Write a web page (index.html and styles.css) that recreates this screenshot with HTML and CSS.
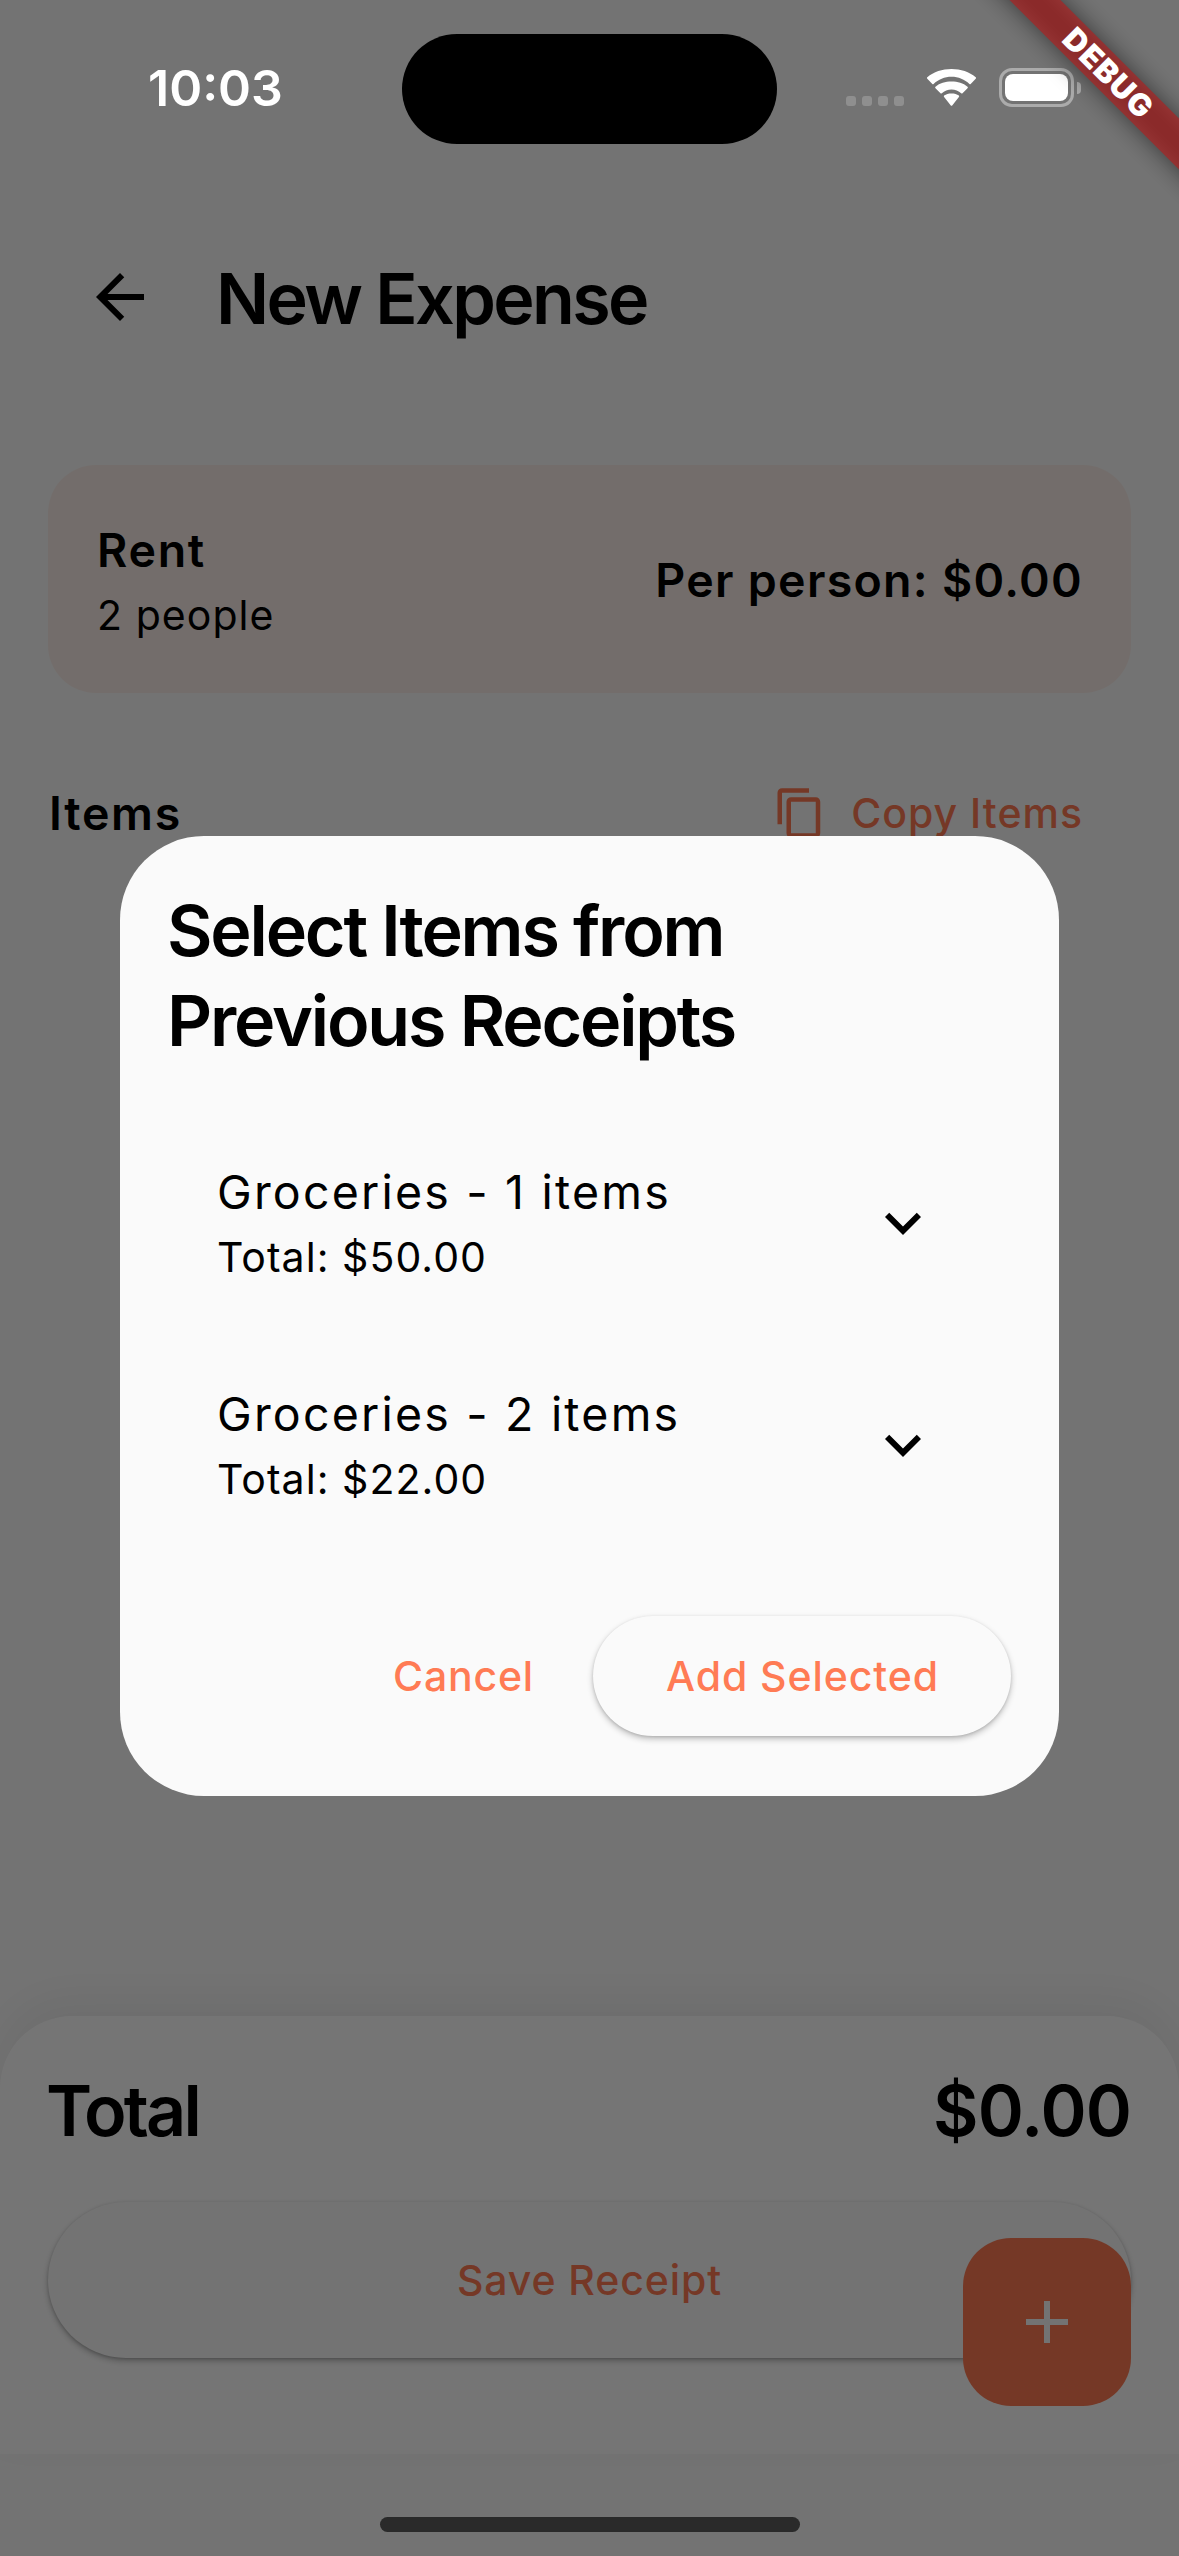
FILE: index.html
```html
<!DOCTYPE html>
<html lang="en">
<head>
<meta charset="utf-8">
<title>New Expense</title>
<link rel="stylesheet" href="styles.css">
</head>
<body>
<div class="screen">
  <main class="page">
    <header class="app-bar">
      <svg class="icon-back" viewBox="0 0 24 24" aria-hidden="true"><path d="M20 11H7.83l5.59-5.59L12 4l-8 8 8 8 1.41-1.41L7.83 13H20v-2z"/></svg>
      <h1 class="headline page-title">New Expense</h1>
    </header>

    <section class="summary">
      <div class="summary-info">
        <span class="title-md rent">Rent</span>
        <span class="body-md people">2 people</span>
      </div>
      <span class="title-md per-person">Per person: $0.00</span>
    </section>

    <section class="items-row">
      <h2 class="title-md items-title">Items</h2>
      <div class="copy">
        <svg class="icon-copy" viewBox="0 0 24 24" aria-hidden="true"><path d="M16 1H4c-1.1 0-2 .9-2 2v14h2V3h12V1zm3 4H8c-1.1 0-2 .9-2 2v14c0 1.100.9 2 2 2h11c1.100 0 2-.9 2-2V7c0-1.100-.9-2-2-2zm0 16H8V7h11v14z"/></svg>
        <span class="label copy-label">Copy Items</span>
      </div>
    </section>

    <section class="sheet">
      <div class="total-row">
        <span class="headline total-label">Total</span>
        <span class="headline total-value">$0.00</span>
      </div>
      <button class="save label">Save Receipt</button>
    </section>
    <button class="fab" aria-label="Add item">
      <svg class="icon-add" viewBox="0 0 24 24" aria-hidden="true"><path d="M19 13h-6v6h-2v-6H5v-2h6V5h2v6h6v2z"/></svg>
    </button>
  </main>

  <div class="scrim">
    <div class="dialog">
      <h2 class="headline dialog-title">Select Items from<br>Previous Receipts</h2>
      <div class="receipts">
        <div class="receipt">
          <div class="receipt-text">
            <span class="body-lg">Groceries - 1 items</span>
            <span class="body-md">Total: $50.00</span>
          </div>
          <svg class="icon-more" viewBox="0 0 24 24" aria-hidden="true"><path d="M16.590 8.590L12 13.170 7.410 8.590 6 10l6 6 6-6z"/></svg>
        </div>
        <div class="receipt">
          <div class="receipt-text">
            <span class="body-lg">Groceries - 2 items</span>
            <span class="body-md">Total: $22.00</span>
          </div>
          <svg class="icon-more" viewBox="0 0 24 24" aria-hidden="true"><path d="M16.590 8.590L12 13.170 7.410 8.590 6 10l6 6 6-6z"/></svg>
        </div>
      </div>
      <div class="actions">
        <button class="cancel label">Cancel</button>
        <button class="add label">Add Selected</button>
      </div>
    </div>
  </div>

  <div class="status-bar">
    <span class="time">10:03</span>
    <span class="island"></span>
    <div class="status-icons">
      <span class="cell"><i></i><i></i><i></i><i></i></span>
      <svg class="wifi" viewBox="0 0 51 38" aria-hidden="true">
        <path d="M25.500 7.800c6.900 0 13.200 2.700 17.900 7.100.4.4.9.4 1.300 0l5-5.100c.5-.5.5-1.100 0-1.500C43.300 2.800 34.800 0 25.500 0S7.700 2.800 1.300 8.300c-.5.4-.5 1 0 1.500l5 5.100c.4.4.9.4 1.300 0C12.300 10.500 18.600 7.800 25.500 7.800z"/>
        <path d="M25.500 20.600c3.700 0 7.100 1.400 9.700 3.700.4.4.9.4 1.300 0l5-5c.5-.5.5-1.100 0-1.500-4.200-3.900-9.800-5.300-16-5.300s-11.800 1.400-16 5.300c-.5.4-.5 1 0 1.500l5 5c.4.4.9.4 1.300 0 2.600-2.300 6-3.700 9.700-3.700z"/>
        <path d="M32.900 28c.4-.4.400-1 0-1.400-2-1.500-4.500-2.100-7.400-2.100s-5.400.6-7.400 2.100c-.4.4-.4 1 0 1.400l6.700 8.400c.4.5 1 .5 1.400 0z"/>
      </svg>
      <span class="battery"><span class="battery-level"></span></span>
    </div>
  </div>

  <div class="banner-corner">
    <div class="banner-shadow"></div>
    <div class="banner">DEBUG</div>
  </div>
  <div class="home-indicator"></div>
</div>
</body>
</html>
```
FILE: styles.css
```css
* { box-sizing: border-box; margin: 0; padding: 0; }

body {
  width: 1179px;
  height: 2556px;
  overflow: hidden;
  font-family: Inter, "Liberation Sans", sans-serif;
  color: #000;
}

button { border: 0; background: none; font-family: inherit; }
svg { display: block; flex: none; }

.screen { position: relative; width: 1179px; height: 2556px; overflow: hidden; background: #fafafa; }

/* Type scale */
.headline { font-size: 70px; font-weight: 600; line-height: 90px; letter-spacing: -2.2px; white-space: nowrap; }
.title-md { font-size: 46.5px; font-weight: 600; line-height: 66px; letter-spacing: 1.3px; white-space: nowrap; }
.body-lg { font-size: 46.5px; font-weight: 400; line-height: 66px; letter-spacing: 2.2px; white-space: nowrap; }
.body-md { font-size: 41px; font-weight: 400; line-height: 64px; letter-spacing: 1.05px; white-space: nowrap; }
.label { font-size: 41px; font-weight: 500; line-height: 60px; letter-spacing: .9px; color: #ff7b54; white-space: nowrap; }

/* Page behind the dialog */
.page { display: flex; flex-direction: column; height: 100%; padding: 177px 0 102px; }

.app-bar { display: flex; align-items: center; height: 240px; padding: 0 84px; gap: 60px; }
.icon-back { width: 72px; height: 72px; }
.page-title { padding-top: 3px; letter-spacing: -2.65px; }

.summary {
  display: flex; align-items: center; justify-content: space-between;
  height: 228px; margin: 48px 48px 0; padding: 0 48px 0 49px;
  border-radius: 48px; background: #faeee9;
}
.summary-info { display: flex; flex-direction: column; padding-top: 5px; }
.rent, .items-title { letter-spacing: 1.7px; }
.per-person { padding-top: 1px; }

.items-row { display: flex; align-items: center; justify-content: space-between; height: 144px; margin: 48px 48px 0 49px; }
.copy { display: flex; align-items: center; gap: 24px; padding-right: 48px; }
.copy-label { letter-spacing: 1px; }
.icon-copy { width: 54px; height: 54px; fill: #ff7b54; }

.sheet {
  margin-top: auto; height: 438px; padding: 48px;
  border-radius: 72px 72px 0 0; background: #fff;
  box-shadow: 0 -15px 38px rgba(0, 0, 0, .055);
}
.total-row { display: flex; align-items: center; justify-content: space-between; height: 94px; }
.total-label { margin-left: -2px; letter-spacing: -2.8px; }
.total-value { letter-spacing: -.9px; }
.save {
  display: block; width: 100%; height: 156px; margin-top: 44px;
  border-radius: 78px; background: #fafafa;
  box-shadow: 0 3px 6px rgba(0, 0, 0, .26), 0 1px 3px rgba(0, 0, 0, .15);
}
.fab {
  position: absolute; right: 48px; bottom: 150px;
  display: grid; place-items: center; width: 168px; height: 168px;
  border-radius: 48px; background: #ff7b54;
}
.icon-add { width: 72px; height: 72px; fill: #fafafa; }

/* Dialog */
.scrim {
  position: absolute; inset: 0;
  display: flex; align-items: center; justify-content: center;
  padding: 177px 0 102px; background: rgba(0, 0, 0, .54);
}
.dialog {
  display: flex; flex-direction: column;
  width: 939px; height: 960px; padding: 50px 48px 60px;
  border-radius: 84px; background: #fafafa;
}
.dialog-title { margin-left: -1px; }
.receipts { padding: 46px 72px 0 49px; }
.receipt { display: flex; align-items: center; justify-content: space-between; height: 222px; }
.receipt-text { display: flex; flex-direction: column; padding-top: 2px; }
.icon-more { width: 72px; height: 72px; }
.actions { display: flex; align-items: center; justify-content: flex-end; gap: 24px; margin-top: auto; }
.cancel { padding: 0 35px; letter-spacing: .8px; }
.add {
  width: 418px; height: 120px; padding-left: 1px; border-radius: 60px; background: #fafafa;
  box-shadow: 0 3px 6px rgba(0, 0, 0, .24), 0 1px 3px rgba(0, 0, 0, .12);
}

/* System overlays */
.status-bar { position: absolute; inset: 0 0 auto 0; height: 175px; display: flex; align-items: center; justify-content: space-between; padding: 0 98px 0 148px; }
.time { font-size: 50px; font-weight: 600; line-height: 60px; letter-spacing: 0; color: #fff; width: 150px; }
.island { position: absolute; left: 402px; top: 34px; width: 375px; height: 110px; border-radius: 55px; background: #000; }
.status-icons { display: flex; align-items: center; width: 235px; }
.cell { display: flex; gap: 6px; padding-top: 27px; }
.cell i { width: 10px; height: 10px; border-radius: 3px; background: #8f8f8f; }
.wifi { width: 51px; height: 38px; margin-left: 22px; fill: #fff; }
.battery { position: relative; width: 75px; height: 39px; margin-left: 22px; padding: 3px; border: 3px solid #ababab; border-radius: 13px; }
.battery::after { content: ""; position: absolute; right: -10px; top: 11px; width: 4px; height: 12px; border-radius: 0 4px 4px 0; background: #ababab; }
.battery-level { display: block; height: 100%; border-radius: 8px; background: #fff; }

.banner-corner { position: absolute; top: 0; right: 0; width: 300px; height: 300px; overflow: hidden; }
.banner-shadow, .banner { position: absolute; left: 28px; top: 54px; width: 400px; height: 36px; transform: rotate(45deg); }
.banner-shadow { background: rgba(0, 0, 0, .5); filter: blur(12px); }
.banner { padding-left: 4px; background: rgba(183, 28, 28, .627); color: #fff; font-size: 31px; font-weight: 900; line-height: 36px; letter-spacing: 1.1px; text-align: center; }

.home-indicator { position: absolute; left: 380px; bottom: 24px; width: 420px; height: 15px; border-radius: 8px; background: #2a2a2a; }
```
